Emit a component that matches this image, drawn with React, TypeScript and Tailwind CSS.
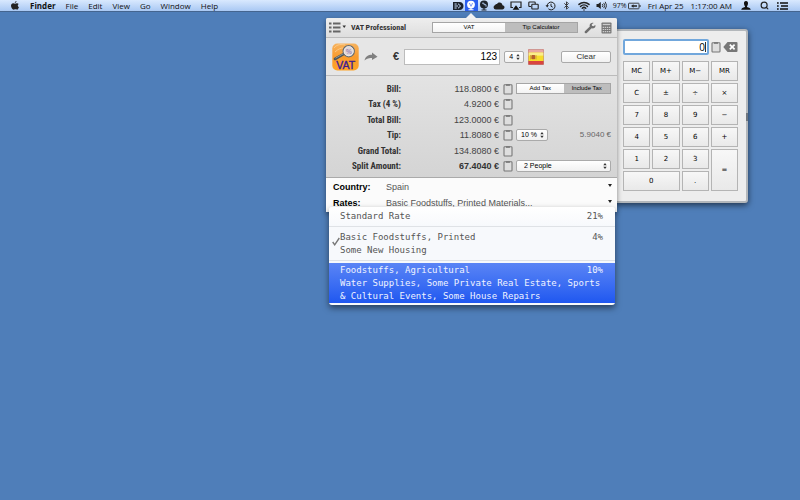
import React, { useState } from 'react';
import clsx from 'clsx';
import { Bluetooth, Search, Wifi } from 'lucide-react';

const CONDENSED = "font-['Liberation_Sans_Narrow','Roboto_Condensed','Roboto',sans-serif]";

const menus = ['File', 'Edit', 'View', 'Go', 'Window', 'Help'];

const keys = [
  'MC', 'M+', 'M−', 'MR',
  'C', '±', '÷', '×',
  '7', '8', '9', '−',
  '4', '5', '6', '+',
  '1', '2', '3', '=',
  '0', '.',
];

const rows = [
  { label: 'Bill:', value: '118.0800 €' },
  { label: 'Tax (4 %)', value: '4.9200 €' },
  { label: 'Total Bill:', value: '123.0000 €' },
  { label: 'Tip:', value: '11.8080 €' },
  { label: 'Grand Total:', value: '134.8080 €' },
  { label: 'Split Amount:', value: '67.4040 €' },
];

const rates = [
  { lines: ['Standard Rate'], percent: '21%' },
  { lines: ['Basic Foodstuffs, Printed', 'Some New Housing'], percent: '4%' },
  {
    lines: [
      'Foodstuffs, Agricultural',
      'Water Supplies, Some Private Real Estate, Sports',
      '& Cultural Events, Some House Repairs',
    ],
    percent: '10%',
  },
];

function Clipboard() {
  return (
    <svg viewBox="0 0 10 12" className="h-3 w-[10px] shrink-0" fill="none">
      <rect x="1" y="1.8" width="8" height="9.2" rx="0.8" fill="#dedede" stroke="#777" strokeWidth="1.1" />
      <path d="M3 1.2h4v1.6H3z" fill="#777" />
    </svg>
  );
}

function Arrows({ className }: { className?: string }) {
  return (
    <svg viewBox="0 0 4 7" className={clsx('pointer-events-none absolute top-1/2 h-[7px] w-1 -translate-y-1/2', className)}>
      <path d="M0.3 2.7 2 0.4 3.7 2.7zM0.3 4.3 2 6.6 3.7 4.3z" fill="#333" />
    </svg>
  );
}

function Picker({ label, value, className, selectClass }: { label: string; value: string; className?: string; selectClass?: string }) {
  return (
    <div className={clsx('relative', className)}>
      <select
        aria-label={label}
        className={clsx(
          'block h-3 w-full appearance-none rounded-[2px] border border-[#aaa] bg-gradient-to-b from-white to-[#f1f1f1] text-[7px] leading-[10px] text-black',
          selectClass
        )}
      >
        <option>{value}</option>
      </select>
      <Arrows className="right-1" />
    </div>
  );
}

function Segmented({ items, active, className }: { items: string[]; active: number; className?: string }) {
  const [current, setCurrent] = useState(active);
  return (
    <div className={clsx('flex border border-[#a5a5a5] text-[6px] leading-[9px] text-black', className)}>
      {items.map((item, i) => (
        <button
          key={item}
          onClick={() => setCurrent(i)}
          className={clsx('flex-1', i === current ? 'bg-[#bdbdbd]' : 'bg-gradient-to-b from-white to-[#f3f3f3]')}
        >
          {item}
        </button>
      ))}
    </div>
  );
}

function VatLogo() {
  return (
    <svg viewBox="0 0 27 28" className="h-7 w-[27px]">
      <defs>
        <linearGradient id="orange" x1="0" y1="0" x2="0" y2="1">
          <stop offset="0" stopColor="#f6b25e" />
          <stop offset="0.5" stopColor="#f99b2c" />
          <stop offset="1" stopColor="#ffa426" />
        </linearGradient>
      </defs>
      <rect x="0.3" y="0.5" width="26.4" height="27" rx="5" fill="url(#orange)" />
      <path d="M2 5c3-4 8-4 11-3M3 9c3-3 6-4 8-4" stroke="#fbcf93" strokeWidth="0.8" fill="none" />
      <path d="M11.5 11.2 3 16" stroke="#4c555a" strokeWidth="2.6" strokeLinecap="round" />
      <path d="M11 10.9 3.5 15.2" stroke="#a9b5b3" strokeWidth="0.7" />
      <circle cx="16.7" cy="8.2" r="5.6" fill="#dfd5d6" stroke="#646b70" strokeWidth="1.2" />
      <circle cx="16.7" cy="8.2" r="4.6" fill="none" stroke="#f4f1ee" strokeWidth="0.8" />
      <text x="16.8" y="10.6" textAnchor="middle" fontSize="6.5" fontWeight="bold" fontFamily="Liberation Sans, sans-serif" fill="#9a86b5">%</text>
      <text x="13.8" y="25.6" textAnchor="middle" fontSize="10.5" fontFamily="Liberation Sans, sans-serif" fill="#3a1c94" stroke="#3a1c94" strokeWidth="0.35">VAT</text>
    </svg>
  );
}

function SpainFlag() {
  return (
    <svg viewBox="0 0 16 16" className="h-4 w-4">
      <rect width="16" height="16" rx="1.5" fill="#d9453f" />
      <rect width="16" height="4" rx="1.5" fill="#e9a8a2" />
      <rect y="3.6" width="16" height="8.4" fill="#f6dd2b" />
      <rect y="3.6" width="16" height="3" fill="#fbee8a" />
      <rect x="3.4" y="6" width="3.8" height="4.2" rx="0.8" fill="#b5602f" />
      <path d="M2.6 6v4.4M8 6v4.4" stroke="#c99438" strokeWidth="0.8" />
      <rect x="0.4" y="0.4" width="15.2" height="15.2" rx="1.5" fill="none" stroke="#b98a86" strokeWidth="0.6" />
    </svg>
  );
}

function MenuBar() {
  return (
    <header className="flex h-3 items-center border-b border-[#45658f] bg-gradient-to-b from-[#d9e9fe] to-[#a9c8f3] pr-3 pl-[11px] font-['Open_Sans','Noto_Sans',sans-serif] text-[8px] leading-[11px] text-[#111]">
      <svg viewBox="0 0 16 18" className="mr-[11px] h-[9px] w-2" fill="#222">
        <path d="M11 0c.2 2-1.6 3.9-3.4 3.9C7.4 2 9.2.2 11 0zM15.3 6.2c-2.6 1.5-2.2 5.2.6 6.3-.8 2.2-2.2 4.7-3.7 4.8-1.3 0-1.8-.8-3.5-.8s-2.2.8-3.5.8C2.6 17.2 0 12.8 0 9.5 0 6.2 2.1 4.3 4.3 4.3c1.5 0 2.7 1 3.8 1 1 0 2.3-1.1 4-1 1.3.1 2.5.7 3.2 1.9z" />
      </svg>
      <nav className="flex gap-[10px]">
        <button className="font-bold">Finder</button>
        {menus.map((m) => (
          <button key={m}>{m}</button>
        ))}
      </nav>

      {/* Status items */}
      <div className="ml-auto flex h-full items-center *:shrink-0">
        <span className="flex w-[14px] justify-center">
          <svg viewBox="0 0 12 10" className="h-[10px] w-3">
            <path d="M1 1h6.500C10 1 11.5 3 11.5 5S10 9 7.500 9H1z" fill="#1b222b" />
            <path d="M2.500 3h2.200M2.500 5h3.500M2.500 7h2.200M6 2.700 8.600 5 6 7.300" stroke="#c7dcfa" strokeWidth="1" fill="none" />
          </svg>
        </span>
        <span className="flex h-full w-[13px] items-center justify-center bg-[#2a5fee]">
          <svg viewBox="0 0 10 11" className="h-[11px] w-[10px]">
            <circle cx="5" cy="4.600" r="3.900" fill="#fff" />
            <path d="M2.500 9.700h5M5 8v1.700" stroke="#fff" strokeWidth="1.100" />
            <path d="M3.400 3 5 6.300 6.600 3" stroke="#6d8ff2" strokeWidth="0.900" fill="none" />
          </svg>
        </span>
        <span className="flex w-[13px] justify-center">
          <svg viewBox="0 0 10 11" className="h-[11px] w-[10px]">
            <circle cx="5" cy="4.600" r="4" fill="#1e242c" />
            <path d="M2.500 10h5M5 8v2" stroke="#1e242c" strokeWidth="1.100" />
            <path d="M3 3.200h2v1.500h2v2" stroke="#b9d1f5" strokeWidth="0.900" fill="none" />
          </svg>
        </span>
        <span className="flex w-[17px] justify-center">
          <svg viewBox="0 0 12 8" className="h-2 w-3" fill="#222">
            <path d="M2.800 7.500a2.300 2.300 0 0 1-.6-4.500C2.500 2.200 3.200 1.900 3.900 2.100 4.500.9 5.500.4 6.600.5c1.600.1 2.700 1.200 2.900 2.700 1.200.1 2 1 2 2.100 0 1.200-.9 2.200-2.200 2.200z" />
          </svg>
        </span>
        <span className="flex w-[17px] justify-center">
          <svg viewBox="0 0 12 9" className="h-[9px] w-3" fill="none">
            <path d="M3 6.500H1V1h10v5.500H9" stroke="#222" strokeWidth="1.200" />
            <path d="M6 4.200 9.400 8.700H2.600z" fill="#111" />
          </svg>
        </span>
        <span className="flex w-[17px] justify-center">
          <svg viewBox="0 0 11 9" className="h-[9px] w-[11px]" fill="none" stroke="#222" strokeWidth="1.100">
            <path d="M3 5.500H1.500a.7.7 0 0 1-.7-.7V1.700A.7.7 0 0 1 1.500 1h5a.7.7 0 0 1 .7.700V3" />
            <rect x="3.800" y="3.200" width="6.400" height="4.800" rx="0.700" />
          </svg>
        </span>
        <span className="flex w-[17px] justify-center">
          <svg viewBox="0 0 11 10" className="h-[10px] w-[11px]" fill="none" stroke="#222" strokeWidth="1">
            <path d="M2.200 5a3.900 3.900 0 1 1 1.200 2.800M6 2.700V5.200l1.700 1" />
            <path d="M0.500 4.200h3.400L2.200 6.400z" fill="#222" stroke="none" />
          </svg>
        </span>
        <span className="flex w-4 justify-center"><Bluetooth className="size-[9px]" strokeWidth={2.5} stroke="#333" /></span>
        <span className="flex w-[18px] justify-center"><Wifi className="size-3" strokeWidth={3} stroke="#222" /></span>
        <span className="flex w-[17px] justify-center">
          <svg viewBox="0 0 11 9" className="h-[9px] w-[11px]" fill="none" stroke="#222">
            <path d="M0.500 3h1.700L4.800 1v7L2.200 6H0.500z" fill="#222" stroke="none" />
            <path d="M6.200 3a2.200 2.200 0 0 1 0 3M7.700 1.900a4 4 0 0 1 0 5.200M9.200.8a6 6 0 0 1 0 7.400" strokeWidth="0.900" />
          </svg>
        </span>
        <span className="w-[17px] text-right text-[7px]">97%</span>
        <svg viewBox="0 0 13 8" className="ml-px h-2 w-[13px]">
          <rect x="0.500" y="1.200" width="10.500" height="5.600" rx="0.600" fill="none" stroke="#333" strokeWidth="0.900" />
          <path d="M11.500 3h1v2h-1zM3 4l2.500-1.800v1H9v1.600H5.500v1z" fill="#222" />
        </svg>
        <span className="ml-[7px]">Fri Apr 25</span>
        <span className="ml-[7px]">1:17:00 AM</span>
        <svg viewBox="0 0 10 9" className="ml-[9px] h-[9px] w-[10px]" fill="#111">
          <path d="M5 0c1.500 0 2.100 1 2 2.400S6.300 4.900 6 5.200v.9c.6.500 3.500.7 3.700 2.600H.3C.5 6.800 3.400 6.600 4 6.100v-.9C3.700 4.900 3.100 3.800 3 2.400S3.500 0 5 0z" />
        </svg>
        <Search className="ml-[9px] size-[9px]" strokeWidth={3} stroke="#222" />
        <svg viewBox="0 0 11 8" className="ml-2 h-2 w-[11px]" stroke="#111" strokeWidth="1.400">
          <path d="M0 1h1.700M3 1h8M0 4h1.700M4 4h7M0 7h1.700M3 7h8" />
        </svg>
      </div>
    </header>
  );
}

function Calculator() {
  return (
    <section className="absolute top-[29px] left-[614px] w-[134px] rounded-[3px] border-2 border-[#b3b7bb] bg-[#ededed] pt-2 pr-2 pb-[10px] pl-[7px] shadow-[0_2px_6px_rgba(0,0,0,0.6)]">
      <div className="flex h-4 items-center gap-[2px]">
        <span className="relative">
          <input
            aria-label="Calculator display"
            defaultValue="0"
            className="block h-4 w-[86px] rounded-[2px] border-2 border-[#71a7dc] bg-white pr-[2px] text-right font-['Open_Sans',sans-serif] text-[10px] leading-3 text-black outline-none"
          />
          <span className="absolute top-[3px] right-[3px] h-[10px] w-px bg-[#333]" />
        </span>
        <Clipboard />
        <button aria-label="Delete">
          <svg viewBox="0 0 15 12" className="h-3 w-[15px]">
            <path d="M0.300 6 4.500 1H13.500a1 1 0 0 1 1 1v8a1 1 0 0 1-1 1H4.500z" fill="#777" />
            <path d="M6.800 3.600 11.600 8.400M11.600 3.600 6.800 8.400" stroke="#fff" strokeWidth="1.700" />
          </svg>
        </button>
      </div>
      <div className="mt-[6px] grid grid-cols-4 gap-[2px] font-['DejaVu_Sans',sans-serif] text-[7px] leading-none text-black">
        {keys.map((k, i) => (
          <button
            key={i}
            className={clsx(
              'min-h-5 border border-[#b4b4b4] bg-gradient-to-b from-[#f7f7f7] to-[#e9e9e9]',
              k === '=' && 'row-span-2',
              k === '0' && 'col-span-2'
            )}
          >
            {k}
          </button>
        ))}
      </div>
      <span className="absolute top-[82px] -right-[2px] h-2 w-[2px] bg-[#70777f]" />
    </section>
  );
}

function RatesMenu() {
  const [selected, setSelected] = useState(1);
  return (
    <div
      role="listbox"
      aria-label="Rates"
      className="absolute top-[207px] left-[329px] w-[286px] rounded-[3px] bg-[#f7f9fc] pb-[2px] font-['DejaVu_Sans_Mono',monospace] text-[9px] leading-[13px] text-[#555] shadow-[0_3px_6px_rgba(0,0,0,0.5)]"
    >
      {rates.map((rate, i) => (
        <button
          key={rate.percent}
          role="option"
          aria-selected={i === selected}
          onClick={() => setSelected(i)}
          className={clsx(
            'relative flex w-full justify-between pr-3 pl-[11px] text-left',
            i === 0 && 'rounded-t-[3px] border-b border-[#dfe2e6] bg-gradient-to-b from-white to-[#f7f9fc] pt-[3px] pb-[3px]',
            i === 1 && 'border-b border-[#dfe2e6] pt-1 pb-[3px]',
            i === 2 && 'mt-[2px] bg-gradient-to-b from-[#5a84f5] to-[#1f57f0] pt-px text-[#f0f3ff]'
          )}
        >
          {i === selected && (
            <svg viewBox="0 0 8 9" className="absolute top-[10px] left-[3px] h-[9px] w-2" fill="none">
              <path d="M0.700 5 2.700 7.800 7.300 1" stroke="#777" strokeWidth="1.400" />
            </svg>
          )}
          <span className="whitespace-nowrap">
            {rate.lines.map((line) => (
              <span key={line} className="block">{line}</span>
            ))}
          </span>
          <span className={clsx(i === 2 && '-ml-10')}>{rate.percent}</span>
        </button>
      ))}
    </div>
  );
}

function VatWindow() {
  return (
    <section className="absolute top-[18px] left-[326px] w-[291px] rounded-t-[2px] bg-[#e4e4e4] font-['Liberation_Sans',Arial,sans-serif] text-[9px] text-[#333] shadow-[0_2px_5px_rgba(0,0,0,0.45)]">
      {/* Popover arrow */}
      <svg viewBox="0 0 12 6" className="absolute -top-[5px] left-[139px] h-[6px] w-3">
        <path d="M0 6 6 0 12 6z" fill="#f2f2f2" />
      </svg>

      <div className="flex h-5 items-center rounded-t-[2px] border-b border-[#bbb] bg-gradient-to-b from-[#eee] to-[#dedede] pr-[5px] pl-[3px]">
        <button aria-label="Menu">
          <svg viewBox="0 0 18 11" className="h-[11px] w-[18px]">
            <path d="M0 1.500h2.500M4 1.500h7.500M0 5.500h2.500M4 5.500h7.500M0 9.500h2.500M4 9.500h7.500" stroke="#666" strokeWidth="2" />
            <path d="M13.500 3.500h3.500L15.200 6z" fill="#333" />
          </svg>
        </button>
        <h1 className={clsx('ml-1 text-[8px] font-bold whitespace-nowrap', CONDENSED)}>VAT Professional</h1>
        <Segmented items={['VAT', 'Tip Calculator']} active={1} className="ml-auto w-[146px]" />
        <button aria-label="Settings" className="ml-[6px]">
          <svg viewBox="0 0 12 12" className="size-3">
            <path d="M11.300 3 9.400 4.300 7.900 3.800 7.800 2.300 9.600.9C8 .2 6 1.200 5.700 3c-.1.600 0 1.200.1 1.600L.9 9.300c-1 1.200.7 2.700 1.900 1.800l4.800-4.800c2.300.6 4.500-1.100 3.700-3.300z" fill="#6f6f6f" />
          </svg>
        </button>
        <button aria-label="Calculator" className="ml-[5px]">
          <svg viewBox="0 0 11 12" className="h-3 w-[11px]">
            <rect x="0.500" y="0.500" width="10" height="11" rx="0.800" fill="#777" />
            <path d="M1.700 2.500h7.600" stroke="#ccc" strokeWidth="1.300" />
            <path d="M1.700 5.400h7.600M1.700 7.500h7.600M1.700 9.600h7.600" stroke="#ccc" strokeWidth="1.100" strokeDasharray="1.400 0.700" />
          </svg>
        </button>
      </div>

      <div className="flex h-[38px] items-center border-b border-[#bbb] bg-[#e6e6e6] pr-[6px] pl-[6px]">
        <VatLogo />
        <svg viewBox="0 0 14 9" className="ml-[5px] h-[9px] w-[14px]">
          <path d="M0.500 8.500C1.200 4.500 4 2.700 8 2.700V0.500L13.500 4.700 8 8V6C5 5.700 2.500 6.500 0.500 8.500z" fill="#808080" />
        </svg>
        <label htmlFor="amount" className="ml-[15px] text-[11px] font-bold">€</label>
        <input
          id="amount"
          defaultValue="123"
          className="ml-[5px] h-4 w-24 border border-[#bcbcbc] bg-white pr-[2px] text-right text-[10px] text-black"
        />
        <Picker label="VAT rate" value="4" className="ml-1 w-5" selectClass="pl-1" />
        <span className="ml-1"><SpainFlag /></span>
        <button className="ml-auto h-3 w-[50px] rounded-[2px] border border-[#aaa] bg-gradient-to-b from-white to-[#f1f1f1] text-[8px] leading-[10px]">
          Clear
        </button>
      </div>

      <div className="h-[102px] border-b border-[#aaa] bg-gradient-to-b from-[#e3e3e3] to-[#d4d4d4] pt-[5px] pr-[6px] pb-[3px]">
        <table className="h-full w-full border-collapse leading-3">
          <tbody>
            {rows.map((row) => (
              <tr key={row.label}>
                <th scope="row" className={clsx('w-[75px] p-0 text-right font-bold whitespace-nowrap', CONDENSED)}>{row.label}</th>
                <td className={clsx('w-[98px] p-0 text-right', row.label === 'Split Amount:' ? 'font-bold' : 'text-[#444]')}>{row.value}</td>
                <td className="w-[17px] p-0 pl-1"><Clipboard /></td>
                <td className="p-0">
                  {row.label === 'Bill:' && <Segmented items={['Add Tax', 'Include Tax']} active={1} />}
                  {row.label === 'Tip:' && (
                    <div className="flex items-center justify-between">
                      <Picker label="Tip percent" value="10 %" className="w-8" selectClass="pl-1" />
                      <span className="text-[8px] text-[#666]">5.9040 €</span>
                    </div>
                  )}
                  {row.label === 'Split Amount:' && <Picker label="Split between" value="2 People" selectClass="pl-[7px]" />}
                </td>
              </tr>
            ))}
          </tbody>
        </table>
      </div>

      <div className="bg-[#fbfbfb] pt-px pb-px pl-[7px] leading-4">
        {[
          ['Country:', 'Spain'],
          ['Rates:', 'Basic Foodstuffs, Printed Materials...'],
        ].map(([label, value]) => (
          <label key={label} className="relative flex h-4 items-center">
            <span className="w-[53px] font-bold text-black">{label}</span>
            <select className="h-4 flex-1 appearance-none bg-transparent text-[#555]">
              <option>{value}</option>
            </select>
            <svg viewBox="0 0 4 3" className="pointer-events-none absolute top-[5px] right-[5px] h-[3px] w-1">
              <path d="M0 0h4L2 3z" fill="#222" />
            </svg>
          </label>
        ))}
      </div>
    </section>
  );
}

export default function App() {
  return (
    <div className="relative min-h-screen overflow-hidden bg-[#4f7eb9]">
      <MenuBar />
      <Calculator />
      <VatWindow />
      <RatesMenu />
    </div>
  );
}
